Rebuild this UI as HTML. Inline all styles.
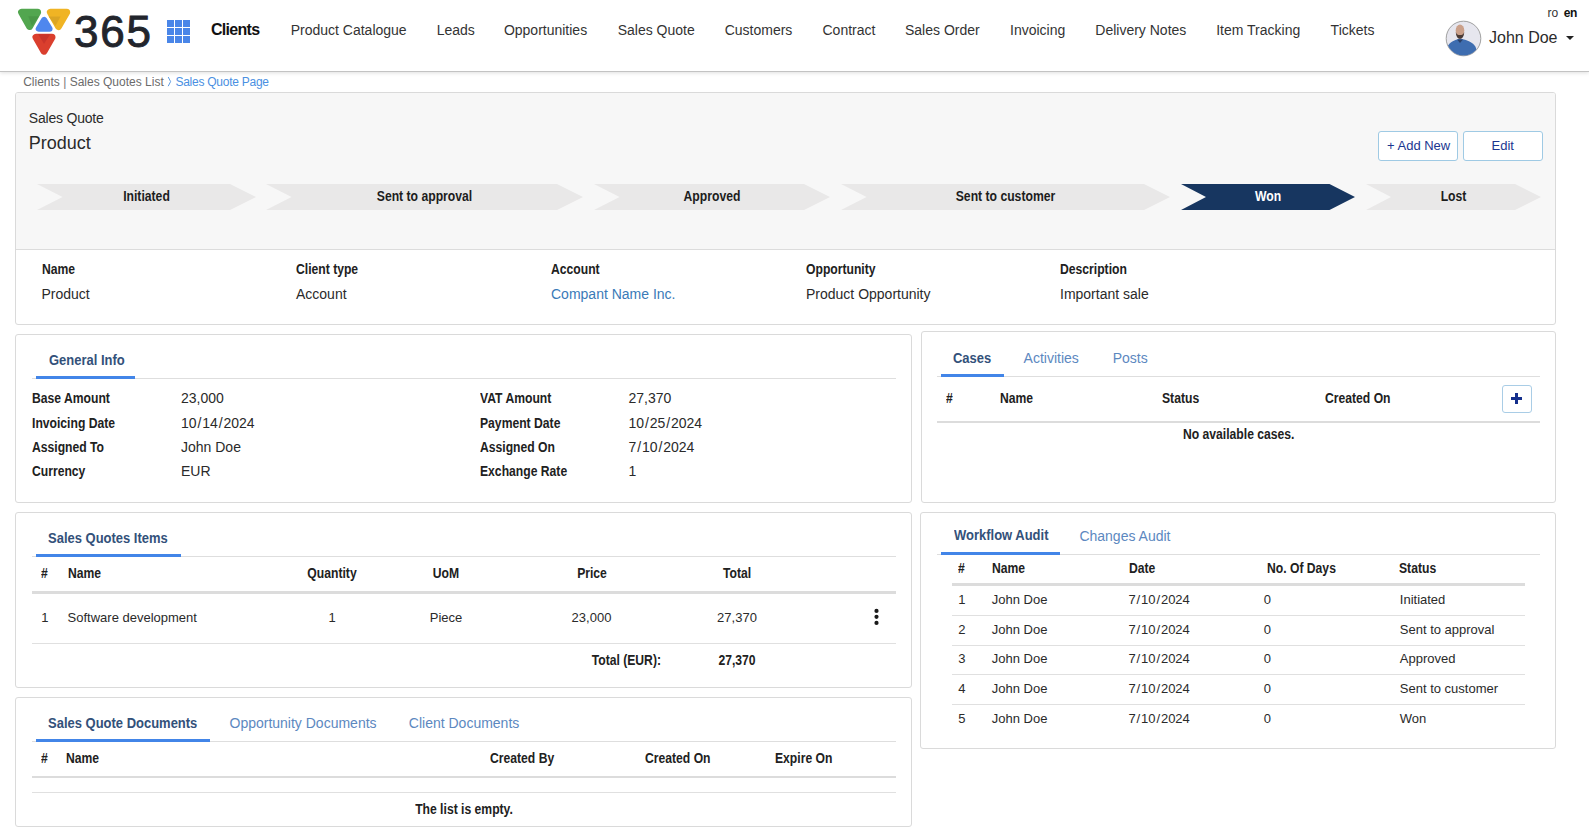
<!DOCTYPE html>
<html><head><meta charset="utf-8">
<style>
html,body{margin:0;padding:0;}
body{width:1589px;height:831px;overflow:hidden;position:relative;background:#fff;font-family:"Liberation Sans",sans-serif;color:#222;}
.sl{margin:0 0.9px;}
.t{position:absolute;white-space:nowrap;line-height:1;}
.hdr{position:absolute;left:0;top:0;width:1589px;height:71px;background:#fff;border-bottom:1px solid #c3c3c3;box-shadow:0 1px 4px rgba(0,0,0,0.13);}
.nav{font-size:14px;color:#333;}
.card{position:absolute;border:1px solid #dadada;border-radius:3px;background:#fff;box-sizing:border-box;}
.b13{font-size:13.9px;font-weight:bold;color:#212121;transform:scaleX(0.875);transform-origin:0 0;}
.c{transform-origin:50% 0 !important;}
.rt{transform-origin:100% 0 !important;}
.r14{font-size:14px;color:#2a2a2a;}
.r13{font-size:13px;color:#2a2a2a;}
.tabA{font-size:14.2px;color:#33517a;font-weight:bold;transform:scaleX(0.915);transform-origin:0 0;}
.tabI{font-size:14px;color:#5c88bf;}
.ul{position:absolute;height:3px;background:#4285e8;}
.sep{position:absolute;height:1px;background:#dedede;}
.thk{position:absolute;height:3px;background:#dcdcdc;}
.ln{position:absolute;height:1px;background:#e0e0e0;}
.chev{position:absolute;top:184px;height:26px;}
.chev svg{position:absolute;left:0;top:0;}
.chev span{position:absolute;left:0;right:0;top:4.8px;text-align:center;font-size:14px;font-weight:bold;letter-spacing:0;transform:scaleX(0.87);line-height:1;color:#1d1d1d;}
.btn{position:absolute;top:131px;height:30px;width:80px;box-sizing:border-box;border:1px solid #9fcae4;border-radius:3px;background:#fff;}
</style></head>
<body>
<!-- HEADER -->
<div class="hdr"></div>
<svg style="position:absolute;left:0;top:0" width="160" height="60">
  <g stroke-linejoin="round">
    <path d="M21.6,12.3 L37.6,12.3 L29.6,26.4 Z" fill="#52a64f" stroke="#52a64f" stroke-width="7"/>
    <path d="M50.4,12.3 L66.7,12.3 L58.5,26.5 Z" fill="#f0b424" stroke="#f0b424" stroke-width="7"/>
    <path d="M38.7,28.8 L49.6,28.8 L44.15,19.8 Z" fill="#4f87ee" stroke="#4f87ee" stroke-width="6"/>
    <path d="M36,37.2 L52,37.2 L44,51.2 Z" fill="#da3f2e" stroke="#da3f2e" stroke-width="7"/>
  </g>
  <path d="M28.3,16.2 L39,16.2 L32,26 Z" fill="#4a9847"/>
  <path d="M48.6,16.4 L60.5,16.4 L55.6,25.8 Z" fill="#dba524"/>
  <path d="M38.2,34.2 L50.3,34.2 L44,43.8 Z" fill="#c9342b"/>
</svg>
<div class="t" style="left:74px;top:9.5px;font-size:44px;color:#22252c;-webkit-text-stroke:0.9px #22252c;letter-spacing:1.8px;">365</div>
<svg style="position:absolute;left:167px;top:20px" width="23" height="23">
  <g fill="#4a86e8">
    <rect x="0" y="0" width="7" height="7"/><rect x="8" y="0" width="7" height="7"/><rect x="16" y="0" width="7" height="7"/>
    <rect x="0" y="8" width="7" height="7"/><rect x="8" y="8" width="7" height="7"/><rect x="16" y="8" width="7" height="7"/>
    <rect x="0" y="16" width="7" height="7"/><rect x="8" y="16" width="7" height="7"/><rect x="16" y="16" width="7" height="7"/>
  </g>
</svg>
<div class="t" style="left:211px;top:21.8px;font-size:16px;font-weight:bold;color:#111;letter-spacing:-0.7px;">Clients</div>
<div class="t nav" style="left:290.7px;top:23px;">Product Catalogue</div>
<div class="t nav" style="left:436.7px;top:23px;">Leads</div>
<div class="t nav" style="left:503.9px;top:23px;">Opportunities</div>
<div class="t nav" style="left:617.7px;top:23px;">Sales Quote</div>
<div class="t nav" style="left:724.7px;top:23px;">Customers</div>
<div class="t nav" style="left:822.5px;top:23px;">Contract</div>
<div class="t nav" style="left:905px;top:23px;">Sales Order</div>
<div class="t nav" style="left:1010px;top:23px;">Invoicing</div>
<div class="t nav" style="left:1095.3px;top:23px;">Delivery Notes</div>
<div class="t nav" style="left:1216.2px;top:23px;">Item Tracking</div>
<div class="t nav" style="left:1330.6px;top:23px;">Tickets</div>
<div class="t" style="left:1547.5px;top:6.8px;font-size:12px;color:#333;">ro</div>
<div class="t" style="left:1563.8px;top:6.8px;font-size:12px;font-weight:bold;color:#111;letter-spacing:-0.5px;">en</div>
<svg style="position:absolute;left:1445px;top:20px" width="37" height="37">
  <defs><clipPath id="av"><circle cx="18.5" cy="18.5" r="17"/></clipPath></defs>
  <circle cx="18.5" cy="18.5" r="17.3" fill="#e6e6ee" stroke="#a0a0a0" stroke-width="1"/>
  <g clip-path="url(#av)">
    <path d="M0,37 L1.5,29 C3,23 8,21 12,19.5 L15,18.5 L19,19.5 C24,21 29,23 31,28 L33,37 Z" fill="#3e6db0"/>
    <path d="M12,19.5 L15,23 L18,19.5 Z" fill="#2a3f66"/>
    <ellipse cx="15" cy="10.5" rx="4.3" ry="6" fill="#caa08a"/>
    <path d="M10.8,12 C11,17 13,18.8 15,18.8 C17,18.8 19,17 19.2,12 C18.5,14.5 17,15 15,15 C13,15 11.5,14.5 10.8,12 Z" fill="#4b3b35"/>
  </g>
</svg>
<div class="t" style="left:1489px;top:29.8px;font-size:16px;color:#2b2b2b;">John Doe</div>
<svg style="position:absolute;left:1566px;top:36px" width="8" height="4"><path d="M0,0 L8,0 L4,4 Z" fill="#222"/></svg>

<!-- BREADCRUMB -->
<div class="t" style="left:23.2px;top:75.8px;font-size:12px;color:#6b6b6b;">Clients <span style="color:#777">|</span> Sales Quotes List</div>
<svg style="position:absolute;left:166px;top:76px" width="7" height="12"><path d="M2.2,1 L4.6,5.6 L2.2,10.2" fill="none" stroke="#5d9be3" stroke-width="1"/></svg>
<div class="t" style="left:175.4px;top:75.8px;font-size:12px;color:#4a90e2;letter-spacing:-0.25px;">Sales Quote Page</div>

<!-- MAIN CARD -->
<div class="card" style="left:15px;top:92px;width:1541px;height:233px;overflow:hidden;">
  <div style="position:absolute;left:0;top:0;right:0;height:156px;background:#f7f7f7;border-bottom:1px solid #dcdcdc;"></div>
</div>
<div class="t" style="left:28.8px;top:111px;font-size:14px;color:#2b2b2b;letter-spacing:-0.2px;">Sales Quote</div>
<div class="t" style="left:28.8px;top:133.5px;font-size:18px;color:#2b2b2b;">Product</div>
<div class="btn" style="left:1378px;"></div>
<div class="btn" style="left:1463px;"></div>
<div class="t" style="left:1387px;top:138.7px;font-size:13px;color:#1b3690;">+ Add New</div>
<div class="t" style="left:1491.5px;top:138.7px;font-size:13px;color:#1b3690;">Edit</div>

<!-- CHEVRONS -->
<div class="chev" style="left:37px;width:219px;"><svg width="219" height="26"><path d="M0,0 L193,0 L219,13 L193,26 L0,26 L25.5,13 Z" fill="#e9e8e8"/></svg><span>Initiated</span></div>
<div class="chev" style="left:266px;width:317px;"><svg width="317" height="26"><path d="M0,0 L291,0 L317,13 L291,26 L0,26 L25.5,13 Z" fill="#e9e8e8"/></svg><span>Sent to approval</span></div>
<div class="chev" style="left:594px;width:236px;"><svg width="236" height="26"><path d="M0,0 L210,0 L236,13 L210,26 L0,26 L25.5,13 Z" fill="#e9e8e8"/></svg><span>Approved</span></div>
<div class="chev" style="left:841px;width:329px;"><svg width="329" height="26"><path d="M0,0 L303,0 L329,13 L303,26 L0,26 L25.5,13 Z" fill="#e9e8e8"/></svg><span>Sent to customer</span></div>
<div class="chev" style="left:1181px;width:174px;"><svg width="174" height="26"><path d="M0,0 L148.5,0 L174,13 L148.5,26 L0,26 L25,13 Z" fill="#173660"/></svg><span style="color:#fff">Won</span></div>
<div class="chev" style="left:1366px;width:175px;"><svg width="175" height="26"><path d="M0,0 L149,0 L175,13 L149,26 L0,26 L25,13 Z" fill="#e9e8e8"/></svg><span>Lost</span></div>

<!-- DETAILS -->
<div class="t b13" style="left:41.5px;top:263px;">Name</div>
<div class="t r14" style="left:41.5px;top:287px;">Product</div>
<div class="t b13" style="left:296px;top:263px;">Client type</div>
<div class="t r14" style="left:296px;top:287px;">Account</div>
<div class="t b13" style="left:551px;top:263px;">Account</div>
<div class="t r14" style="left:551px;top:287px;color:#3a7ab8;">Compant Name Inc.</div>
<div class="t b13" style="left:806px;top:263px;">Opportunity</div>
<div class="t r14" style="left:806px;top:287px;">Product Opportunity</div>
<div class="t b13" style="left:1060px;top:263px;">Description</div>
<div class="t r14" style="left:1060px;top:287px;">Important sale</div>

<!-- GENERAL INFO -->
<div class="card" style="left:15px;top:334px;width:897px;height:169px;"></div>
<div class="t tabA" style="left:48.5px;top:352.5px;">General Info</div>
<div class="sep" style="left:32px;top:378px;width:864px;"></div>
<div class="ul" style="left:36px;top:376px;width:99px;"></div>
<div class="t b13" style="left:32.2px;top:392.2px;">Base Amount</div>
<div class="t r14" style="left:181px;top:391.4px;">23,000</div>
<div class="t b13" style="left:32.2px;top:416.5px;">Invoicing Date</div>
<div class="t r14" style="left:181px;top:415.7px;">10<span class="sl">/</span>14<span class="sl">/</span>2024</div>
<div class="t b13" style="left:32.2px;top:440.9px;">Assigned To</div>
<div class="t r14" style="left:181px;top:440.1px;">John Doe</div>
<div class="t b13" style="left:32.2px;top:464.7px;">Currency</div>
<div class="t r14" style="left:181px;top:463.9px;">EUR</div>
<div class="t b13" style="left:479.5px;top:392.2px;">VAT Amount</div>
<div class="t r14" style="left:628.5px;top:391.4px;">27,370</div>
<div class="t b13" style="left:479.5px;top:416.5px;">Payment Date</div>
<div class="t r14" style="left:628.5px;top:415.7px;">10<span class="sl">/</span>25<span class="sl">/</span>2024</div>
<div class="t b13" style="left:479.5px;top:440.9px;">Assigned On</div>
<div class="t r14" style="left:628.5px;top:440.1px;">7<span class="sl">/</span>10<span class="sl">/</span>2024</div>
<div class="t b13" style="left:479.5px;top:464.7px;">Exchange Rate</div>
<div class="t r14" style="left:628.5px;top:463.9px;">1</div>

<!-- CASES -->
<div class="card" style="left:921px;top:331px;width:635px;height:172px;"></div>
<div class="t tabA" style="left:953.4px;top:350.5px;">Cases</div>
<div class="t tabI" style="left:1023.6px;top:351.2px;">Activities</div>
<div class="t tabI" style="left:1112.7px;top:351.2px;">Posts</div>
<div class="sep" style="left:937px;top:376px;width:603px;"></div>
<div class="ul" style="left:941px;top:374px;width:63px;"></div>
<div class="t b13" style="left:946px;top:392px;">#</div>
<div class="t b13" style="left:1000px;top:392px;">Name</div>
<div class="t b13" style="left:1162.4px;top:392px;">Status</div>
<div class="t b13" style="left:1325.4px;top:392px;">Created On</div>
<div style="position:absolute;left:1502px;top:385px;width:30px;height:28px;box-sizing:border-box;border:1px solid #a9cde6;border-radius:3px;"></div>
<svg style="position:absolute;left:1511px;top:393px" width="11" height="11"><path d="M4,0 H7 V4 H11 V7 H7 V11 H4 V7 H0 V4 H4 Z" fill="#142f8c"/></svg>
<div class="thk" style="left:937px;top:421px;width:603px;height:2px;"></div>
<div class="t b13" style="left:1183px;top:428.3px;">No available cases.</div>

<!-- SALES QUOTES ITEMS -->
<div class="card" style="left:15px;top:512px;width:897px;height:176px;"></div>
<div class="t tabA" style="left:47.8px;top:530.6px;">Sales Quotes Items</div>
<div class="sep" style="left:32px;top:556px;width:864px;"></div>
<div class="ul" style="left:36px;top:554px;width:145px;"></div>
<div class="t b13" style="left:40.6px;top:567.2px;">#</div>
<div class="t b13" style="left:67.6px;top:567.2px;">Name</div>
<div class="t b13 c" style="left:282.4px;width:100px;text-align:center;top:567.2px;">Quantity</div>
<div class="t b13 c" style="left:395.8px;width:100px;text-align:center;top:567.2px;">UoM</div>
<div class="t b13 c" style="left:541.5px;width:100px;text-align:center;top:567.2px;">Price</div>
<div class="t b13 c" style="left:687.3px;width:100px;text-align:center;top:567.2px;">Total</div>
<div class="thk" style="left:32px;top:591px;width:864px;"></div>
<div class="t r13" style="left:41.2px;top:610.8px;">1</div>
<div class="t r13" style="left:67.6px;top:610.8px;">Software development</div>
<div class="t r13" style="left:282px;width:100px;text-align:center;top:610.8px;">1</div>
<div class="t r13" style="left:396px;width:100px;text-align:center;top:610.8px;">Piece</div>
<div class="t r13" style="left:541.5px;width:100px;text-align:center;top:610.8px;">23,000</div>
<div class="t r13" style="left:687px;width:100px;text-align:center;top:610.8px;">27,370</div>
<svg style="position:absolute;left:873px;top:608px" width="8" height="18"><g fill="#1a1a1a"><circle cx="3.5" cy="2.9" r="2.1"/><circle cx="3.5" cy="8.8" r="2.1"/><circle cx="3.5" cy="14.9" r="2.1"/></g></svg>
<div class="ln" style="left:32px;top:643px;width:864px;"></div>
<div class="t b13 rt" style="left:561px;width:100px;text-align:right;top:654.1px;">Total (EUR):</div>
<div class="t b13 c" style="left:687px;width:100px;text-align:center;top:654.1px;">27,370</div>

<!-- DOCUMENTS -->
<div class="card" style="left:15px;top:697px;width:897px;height:130px;"></div>
<div class="t tabA" style="left:47.9px;top:716px;">Sales Quote Documents</div>
<div class="t tabI" style="left:229.5px;top:715.7px;">Opportunity Documents</div>
<div class="t tabI" style="left:408.8px;top:715.7px;">Client Documents</div>
<div class="sep" style="left:32px;top:741px;width:864px;"></div>
<div class="ul" style="left:36px;top:739px;width:174px;"></div>
<div class="t b13" style="left:40.7px;top:751.8px;">#</div>
<div class="t b13" style="left:65.9px;top:751.8px;">Name</div>
<div class="t b13" style="left:489.5px;top:751.8px;">Created By</div>
<div class="t b13" style="left:645.3px;top:751.8px;">Created On</div>
<div class="t b13" style="left:775px;top:751.8px;">Expire On</div>
<div class="thk" style="left:32px;top:776px;width:864px;height:2px;"></div>
<div class="ln" style="left:32px;top:792px;width:864px;"></div>
<div class="t b13 c" style="left:364.3px;width:200px;text-align:center;top:802.6px;">The list is empty.</div>

<!-- WORKFLOW AUDIT -->
<div class="card" style="left:920px;top:512px;width:636px;height:237px;"></div>
<div class="t tabA" style="left:953.8px;top:528.3px;">Workflow Audit</div>
<div class="t tabI" style="left:1079.4px;top:529.3px;">Changes Audit</div>
<div class="sep" style="left:937px;top:554px;width:603px;"></div>
<div class="ul" style="left:941px;top:552px;width:119px;"></div>
<div class="t b13" style="left:957.6px;top:562.4px;">#</div>
<div class="t b13" style="left:991.8px;top:562.4px;">Name</div>
<div class="t b13" style="left:1129.4px;top:562.4px;">Date</div>
<div class="t b13" style="left:1266.5px;top:562.4px;">No. Of Days</div>
<div class="t b13" style="left:1398.6px;top:562.4px;">Status</div>
<div class="thk" style="left:952px;top:583px;width:573px;"></div>
<div class="t r13" style="left:958.2px;top:592.7px;">1</div>
<div class="t r13" style="left:991.8px;top:592.7px;">John Doe</div>
<div class="t r13" style="left:1128.4px;top:592.7px;">7<span class="sl">/</span>10<span class="sl">/</span>2024</div>
<div class="t r13" style="left:1263.7px;top:592.7px;">0</div>
<div class="t r13" style="left:1399.8px;top:592.7px;">Initiated</div>
<div class="t r13" style="left:958.2px;top:622.9px;">2</div>
<div class="t r13" style="left:991.8px;top:622.9px;">John Doe</div>
<div class="t r13" style="left:1128.4px;top:622.9px;">7<span class="sl">/</span>10<span class="sl">/</span>2024</div>
<div class="t r13" style="left:1263.7px;top:622.9px;">0</div>
<div class="t r13" style="left:1399.8px;top:622.9px;">Sent to approval</div>
<div class="t r13" style="left:958.2px;top:652.0px;">3</div>
<div class="t r13" style="left:991.8px;top:652.0px;">John Doe</div>
<div class="t r13" style="left:1128.4px;top:652.0px;">7<span class="sl">/</span>10<span class="sl">/</span>2024</div>
<div class="t r13" style="left:1263.7px;top:652.0px;">0</div>
<div class="t r13" style="left:1399.8px;top:652.0px;">Approved</div>
<div class="t r13" style="left:958.2px;top:681.9px;">4</div>
<div class="t r13" style="left:991.8px;top:681.9px;">John Doe</div>
<div class="t r13" style="left:1128.4px;top:681.9px;">7<span class="sl">/</span>10<span class="sl">/</span>2024</div>
<div class="t r13" style="left:1263.7px;top:681.9px;">0</div>
<div class="t r13" style="left:1399.8px;top:681.9px;">Sent to customer</div>
<div class="t r13" style="left:958.2px;top:712.1px;">5</div>
<div class="t r13" style="left:991.8px;top:712.1px;">John Doe</div>
<div class="t r13" style="left:1128.4px;top:712.1px;">7<span class="sl">/</span>10<span class="sl">/</span>2024</div>
<div class="t r13" style="left:1263.7px;top:712.1px;">0</div>
<div class="t r13" style="left:1399.8px;top:712.1px;">Won</div>
<div class="ln" style="left:952px;top:615px;width:573px;"></div>
<div class="ln" style="left:952px;top:645px;width:573px;"></div>
<div class="ln" style="left:952px;top:674px;width:573px;"></div>
<div class="ln" style="left:952px;top:704px;width:573px;"></div>
</body></html>
